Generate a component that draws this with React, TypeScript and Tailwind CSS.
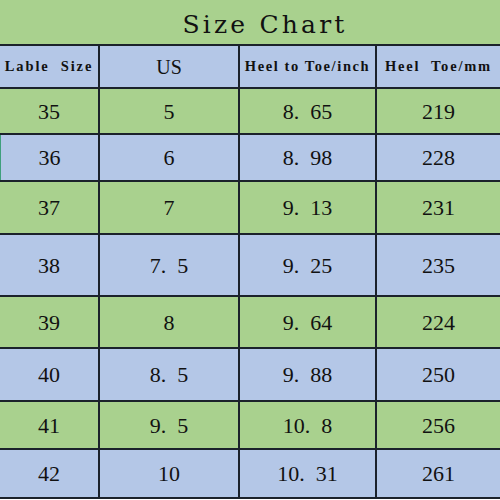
import React from "react";

const GREEN = "bg-[#a9d18e]";
const BLUE = "bg-[#b4c7e7]";

type Row = { a: string; b: string; c: string; d: string; h: string; bg: string; edge?: boolean };

const rows: Row[] = [
  { a: "35", b: "5", c: "8.\u200265", d: "219", h: "h-[46px]", bg: GREEN },
  { a: "36", b: "6", c: "8.\u200298", d: "228", h: "h-[47px]", bg: BLUE, edge: true },
  { a: "37", b: "7", c: "9.\u200213", d: "231", h: "h-[53px]", bg: GREEN },
  { a: "38", b: "7.\u20025", c: "9.\u200225", d: "235", h: "h-[62px]", bg: BLUE },
  { a: "39", b: "8", c: "9.\u200264", d: "224", h: "h-[52px]", bg: GREEN },
  { a: "40", b: "8.\u20025", c: "9.\u200288", d: "250", h: "h-[53px]", bg: BLUE },
  { a: "41", b: "9.\u20025", c: "10.\u20028", d: "256", h: "h-[48px]", bg: GREEN },
  { a: "42", b: "10", c: "10.\u200231", d: "261", h: "h-[49px]", bg: BLUE },
];

const serif = "font-['Liberation_Serif',serif]";
const head = "font-['Liberation_Serif',serif] font-bold text-[14.5px]";

export default function App() {
  return (
    <div className="w-[500px] h-[500px] bg-white overflow-hidden">
      <div className="w-[500px] flex flex-col text-[#111]">
        <div className={`h-[46px] ${GREEN} border-b-2 border-[#1b222b] flex items-center justify-center pl-[30px] pt-[4px]`}>
          <span className="font-['DejaVu_Serif',serif] text-[25px] tracking-[3.2px] leading-none">Size Chart</span>
        </div>
        <div className={`h-[43px] ${BLUE} border-b-2 border-[#1b222b] flex`}>
          <div className={`w-[100px] border-r-2 border-[#1b222b] flex items-center justify-center ${head} tracking-[1.9px] whitespace-pre`}>
            Lable  Size
          </div>
          <div className={`w-[140px] border-r-2 border-[#1b222b] flex items-center justify-center ${serif} text-[20px]`}>
            US
          </div>
          <div className={`w-[137px] border-r-2 border-[#1b222b] flex items-center justify-center ${head} tracking-[1.6px] whitespace-pre`}>
            Heel to Toe/inch
          </div>
          <div className={`flex-1 flex items-center justify-center ${head} tracking-[1.8px] whitespace-pre`}>
            Heel  Toe/mm
          </div>
        </div>
        {rows.map((r) => (
          <div key={r.a} className={`${r.h} ${r.bg} border-b-2 border-[#1b222b] flex ${serif} text-[22px]`}>
            <div className={`w-[100px] border-r-2 border-[#1b222b] flex items-center justify-center ${r.edge ? "border-l border-l-[#3f9f7c]" : ""}`}>
              {r.a}
            </div>
            <div className="w-[140px] border-r-2 border-[#1b222b] flex items-center justify-center whitespace-pre">{r.b}</div>
            <div className="w-[137px] border-r-2 border-[#1b222b] flex items-center justify-center whitespace-pre">{r.c}</div>
            <div className="flex-1 flex items-center justify-center">{r.d}</div>
          </div>
        ))}
      </div>
    </div>
  );
}
